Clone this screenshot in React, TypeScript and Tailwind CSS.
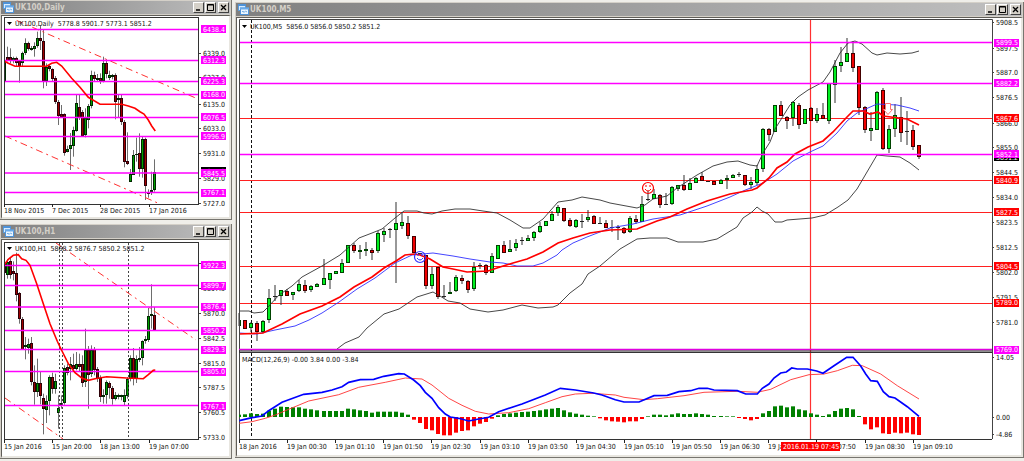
import React from "react";

type Tone = "plain" | "magenta" | "red" | "black";
type Level = [y: number, text: string, tone?: Tone];
type Stamp = [x: number, text: string];

// Polylines are stored on a grid three times finer than the plot.
const fine = (ox: number, oy: number, raw: string) =>
  raw
    .split(" ")
    .map((p) => {
      const [x, y] = p.split(",").map(Number);
      return `${(ox + x / 3).toFixed(1)},${(oy + y / 3).toFixed(1)}`;
    })
    .join(" ");

// Each candle: kind (G up, R down, D flat), high, body top, body bottom, low.
const parse = (raw: string) =>
  raw
    .trim()
    .split(/\s+/)
    .map((c) => {
      const [h, t, b, l] = c.slice(1).split(",").map(Number);
      return { kind: c[0], h, t, b, l };
    });

const DAILY = parse(`
G178,180,243,243 R140,170,184,184 R145,172,182,190 G170,173,182,190 R170,173,188,200 R180,184,198,248
G155,158,188,200 G115,128,158,165 R125,130,148,152 G138,143,150,152 G127,138,148,170 G95,113,138,143
R78,115,124,150 R88,122,243,265 G190,200,243,258 R195,198,206,214 R205,207,238,243 R228,233,307,312
R300,305,348,375 R315,343,352,352 R340,343,458,467 G437,447,455,457 G399,435,447,510 G380,390,437,470
G285,310,393,395 R285,320,355,360 R330,335,407,410 G325,355,405,412 G312,318,360,385 G212,225,318,325
R215,226,238,243 G222,235,240,243 R220,235,243,252 G170,188,243,247 R178,188,222,235 G212,225,233,240
G222,226,232,238 R220,226,305,358 G285,295,300,352 R285,295,365,375 R360,365,487,502 R397,483,492,495
G507,523,545,545 G450,465,525,525 G413,462,465,485 R400,458,507,530 G410,417,507,533 R413,417,557,600
R568,578,583,593 G515,570,577,585 G478,515,570,575`);

const HOURLY = parse(`
R110,123,153,178 G112,120,158,170 R105,118,160,170 R118,148,155,175 R92,152,218,238 R210,213,292,305
R285,290,384,384 G345,370,375,412 G350,365,378,395 R345,362,480,490 R430,481,509,548 G410,483,510,525
R450,484,523,547 R515,528,562,637 G520,538,563,603 G460,464,538,580 R452,464,500,515 G455,478,500,515
G520,558,573,620 G520,542,548,560 G430,438,542,548 R425,436,454,460 G405,425,440,475 R395,430,440,448
G390,426,440,445 R395,426,435,450 R400,426,483,495 G320,384,480,495 R372,384,458,560 G370,384,457,465
R375,380,444,460 R435,442,470,480 R460,468,525,540 G502,518,525,545 G475,480,518,545 R478,482,498,530
R492,497,530,548 G510,520,530,535 G515,520,525,532 G518,520,526,535 G502,520,540,550 G465,470,522,530
G400,408,472,478 R378,408,470,490 G400,410,470,483 G375,408,413,420 G355,357,408,430 G342,350,358,365
G258,283,355,360 G187,275,283,320 R255,278,325,325`);

const MINUTES = parse(`
G313,320,326,326 R320,320,329,329 G322,323,328,332 R321,323,332,341 G320,321,332,333 G289,298,320,323
D285,296,297,301 G290,290,296,305 R289,291,296,296 G292,292,295,300 G280,284,291,292 R280,285,291,293
G285,286,290,292 G283,284,287,287 G259,278,285,285 G273,273,280,289 G271,271,274,274 G259,263,273,273
G245,245,263,263 R243,245,251,253 G245,250,252,259 G242,249,251,256 R248,250,253,260 G231,233,251,253
G228,231,235,242 D228,229,230,238 G202,223,230,283 G212,222,226,229 R216,223,236,239 R236,236,253,253
D253,253,254,254 R255,255,286,289 G267,274,286,289 R267,267,297,299 D285,296,297,298 G282,292,294,294
G275,277,291,292 R275,278,281,284 R280,281,290,293 G262,267,289,291 D263,265,266,269 R264,265,273,275
G253,256,273,273 G245,245,259,259 R241,245,253,253 G240,249,252,252 G239,243,248,251 D237,240,241,245
G235,238,241,241 G231,232,238,241 G222,226,232,233 G221,221,226,226 G211,214,221,221 G205,207,213,216
R208,208,221,222 R218,220,226,227 G219,220,227,228 D214,221,222,228 G210,217,220,222 R215,216,224,224
D217,223,224,224 R220,223,228,228 D220,227,228,232 D225,227,228,240 R227,228,233,234 G216,218,232,233
R215,219,222,224 G196,204,222,222 D191,199,200,201 G189,194,199,199 R194,195,205,208 D193,204,205,205
G186,187,204,205 G185,185,189,191 R175,185,190,191 G178,183,190,190 G177,178,183,183 R172,176,181,181
D181,181,182,182 R181,181,185,185 G179,180,184,184 G175,178,180,189 G174,175,178,178 D172,174,175,177
R175,175,185,186 G177,182,185,189 G165,169,183,185 G128,129,169,172 R128,129,135,141 G105,105,132,132
R101,105,116,116 R116,117,121,129 G101,102,118,126 R103,105,125,129 G109,109,124,124 R107,108,121,121
G108,114,121,123 R103,115,119,119 G83,83,121,124 G60,66,85,103 G47,62,66,72 G38,53,62,62
R41,53,68,72 R66,66,108,115 R106,107,130,133 G112,128,131,141 G91,92,130,130 R88,90,149,150
G125,129,149,153 G104,115,129,137 R97,117,133,142 D111,131,132,145 R125,130,147,150 R145,145,157,159`);

const HISTOGRAM =
  "208 207 204 206 205 196 190 184 185 186 186 190 192 195 197 197 197 197 190 192 195 197 202 199 199 199 199 202 208 223 233 251 255 266 270 270 262 257 255 243 235 230 220 210 206 204 202 200 199 197 195 192 190 188 195 201 205 208 211 213 219 225 228 229 231 228 228 221 213 208 208 210 207 204 206 206 204 206 208 212 212 213 213 218 221 225 221 204 197 183 181 186 183 192 195 204 208 212 207 197 190 188 192 212 237 252 246 264 266 262 264 262 267 269"
    .split(" ")
    .map(Number);

const minuteX = (n: number) => Math.round(239.3 + n * 6.015);

const FILL: Record<Tone, string> = {
  plain: "none",
  magenta: "#ff00ff",
  red: "#ff0000",
  black: "#000000",
};

function PriceScale({ x, tag, levels }: { x: number; tag: number; levels: Level[] }) {
  return (
    <g>
      {levels.map(([y, text, tone = "plain"]) => (
        <g key={text}>
          {tone === "plain" ? (
            <path d={`M${x} ${Math.floor(y) + 0.5}h2`} stroke="#444" />
          ) : (
            <rect x={x + 2} y={Math.round(y - 4)} width={tag} height={8} fill={FILL[tone]} />
          )}
          <text x={x + 4} y={Math.round(y + 2.5)} fill={tone === "plain" ? "#111" : "#fff"}>
            {text}
          </text>
        </g>
      ))}
    </g>
  );
}

function TimeScale({ stamps, y }: { stamps: Stamp[]; y: number }) {
  return (
    <g>
      {stamps.map(([x, text]) => (
        <g key={text}>
          <path d={`M${x + 0.5} ${y}v3`} stroke="#222" />
          <text x={x} y={y + 9} fill="#111">
            {text}
          </text>
        </g>
      ))}
    </g>
  );
}

function Header({ x, y, children }: { x: number; y: number; children: React.ReactNode }) {
  return (
    <g>
      <path d={`M${x} ${y - 4}h5l-2.500 3z`} fill="#000" />
      <text x={x + 8} y={y} fill="#111">
        {children}
      </text>
    </g>
  );
}

function Levels({ x1, x2, ys, color }: { x1: number; x2: number; ys: number[]; color: string }) {
  return (
    <g>
      {ys.map((y) => (
        <path key={y} d={`M${x1} ${y}H${x2}`} stroke={color} strokeWidth={color === "#ff00ff" ? 1.6 : 1} />
      ))}
    </g>
  );
}

function SmallCandles({ data, oy }: { data: ReturnType<typeof parse>; oy: number }) {
  return (
    <g>
      {data.map((c, n) => {
        const x = 4 + n * 3;
        const t = Math.round(oy + c.t / 3);
        const b = Math.max(t + 1, Math.round(oy + c.b / 3));
        const left = n === 0 ? x : x - 1;
        return (
          <g key={n}>
            <rect x={x} y={oy + c.h / 3} width={1} height={(c.l - c.h) / 3} fill="#6e6e6e" />
            <rect x={left} y={t} width={n === 0 ? 2 : 3} height={b - t} fill={c.kind === "G" ? "#002800" : "#2c0008"} />
            {b - t > 2 && (
              <rect x={x} y={t + 1} width={1} height={b - t - 2} fill={c.kind === "G" ? "#00a000" : "#a00000"} />
            )}
          </g>
        );
      })}
    </g>
  );
}

function TerminalIcon() {
  return (
    <svg viewBox="0 0 11 11" className="h-[11px] w-[11px] shrink-0" aria-hidden="true">
      <rect x="0.500" y="0.500" width="7" height="6" fill="#d8ecff" stroke="#5b9ddc" />
      <rect x="0" y="0" width="8" height="2" fill="#4f93d8" />
      <rect x="2.500" y="4" width="8" height="6.500" fill="#eaf5ff" stroke="#4f93d8" />
      <rect x="2" y="3.500" width="9" height="2" fill="#68aaea" />
      <path d="M4 8l1-1 1 1.500 1.500-1.500L9 8" fill="none" stroke="#5b9ddc" strokeWidth="0.800" />
    </svg>
  );
}

const BUTTON =
  "flex h-[11px] w-[11px] items-center justify-center border border-t-white border-l-white border-r-[#404040] border-b-[#404040] bg-[#d4d0c8]";

function ChartWindow({ title, children }: { title: string; children: React.ReactNode }) {
  return (
    <section className="border-r border-b border-[#77756f] bg-[#d4d0c8] pt-px pl-px">
      <header className="mr-px mb-px flex h-[13px] items-center bg-linear-to-r from-[#808080] to-[#c0c0c0] pl-[2px] pr-px">
        <TerminalIcon />
        <h2 className="ml-px flex-1 font-['DejaVu_Sans_Condensed','DejaVu_Sans',sans-serif] text-[8px] leading-[12px] font-bold text-[#d4d0c8]">
          {title}
        </h2>
        <button type="button" aria-label="Minimize" className={BUTTON}>
          <svg viewBox="0 0 9 9" className="h-[9px] w-[9px]">
            <path d="M2 7h4" stroke="#000" strokeWidth="1.500" />
          </svg>
        </button>
        <button type="button" aria-label="Maximize" className={`${BUTTON} ml-px`}>
          <svg viewBox="0 0 9 9" className="h-[9px] w-[9px]">
            <path d="M1.500 1.500h6v6h-6zM1.500 2h6" fill="none" stroke="#000" />
          </svg>
        </button>
        <button type="button" aria-label="Close" className={`${BUTTON} ml-[2px]`}>
          <svg viewBox="0 0 9 9" className="h-[9px] w-[9px]">
            <path d="M2 2l5 5M7 2l-5 5" stroke="#000" strokeWidth="1.300" />
          </svg>
        </button>
      </header>
      <div className="border-t border-r-2 border-b-2 border-l border-t-[#5f5d58] border-r-[#e8e6e0] border-b-[#e8e6e0] border-l-[#5f5d58] bg-white pt-px pl-px">
        {children}
      </div>
    </section>
  );
}

const PLOT = "block h-auto w-full font-['DejaVu_Sans_Condensed','DejaVu_Sans',sans-serif] text-[7px]";

function DailyChart() {
  return (
    <svg viewBox="3 17 226 200" className={PLOT} fill="currentColor">
      <SmallCandles data={DAILY} oy={0} />
      <g fill="none">
        <path d="M16.700 20.500L198 99" stroke="#ff3030" strokeDasharray="7 4 2 4" />
        <path d="M5 136L160 204" stroke="#ff3030" strokeDasharray="7 4 2 4" />
        <Levels x1={5} x2={199} ys={[29.5, 60.5, 81.5, 94.5, 117.5, 136.5, 173, 192.5]} color="#ff00ff" />
        <polyline
          points={fine(0, 0, "14,184 25,190 45,199 140,199 155,190 170,187 185,198 215,235 240,262 265,292 300,313 365,313 385,318 405,325 420,335 432,342 445,360 455,378 466,393")}
          stroke="#ff0000"
          strokeWidth="1.600"
        />
        <rect x="4.500" y="17.500" width="194" height="187" stroke="#333" />
      </g>
      <Header x={7} y={26}>
        UK100,Daily&nbsp; 5778.8 5901.7 5773.1 5851.2
      </Header>
      <PriceScale
        x={199}
        tag={25}
        levels={[
          [53.5, "6339.0"], [77.5, "6237.0"], [104, "6135.0"], [128, "6033.0"], [153, "5931.0"],
          [178, "5829.0"], [203, "5727.0"], [171, "5851.2", "black"],
          [29, "6438.4", "magenta"], [60, "6312.3", "magenta"], [81, "6225.3", "magenta"], [94.5, "6168.0", "magenta"],
          [117, "6076.5", "magenta"], [136, "5996.9", "magenta"], [173, "5845.5", "magenta"], [192.5, "5767.1", "magenta"],
        ]}
      />
      <TimeScale y={204} stamps={[[4, "18 Nov 2015"], [52, "7 Dec 2015"], [100, "28 Dec 2015"], [149, "17 Jan 2016"]]} />
    </svg>
  );
}

function HourlyChart() {
  return (
    <svg viewBox="3 241 226 215" className={PLOT} fill="currentColor">
      <SmallCandles data={HOURLY} oy={222} />
      <g fill="none">
        <path d="M59.500 243V439M62.500 243V439M128.500 243V439" stroke="#444" strokeDasharray="2 2" />
        <path d="M56 243L196 340" stroke="#ff3030" strokeDasharray="7 4 2 4" />
        <path d="M5 398L63 439" stroke="#ff3030" strokeDasharray="7 4 2 4" />
        <Levels x1={5} x2={199} ys={[265.5, 285.5, 307, 330.5, 349.5, 371.5, 405.5]} color="#ff00ff" />
        <polyline
          points={fine(0, 222, "14,127 25,112 40,100 55,98 65,110 78,115 90,130 110,185 130,245 150,305 172,358 180,375 205,425 225,452 245,468 265,475 285,470 320,464 380,468 430,470 445,458 460,445 466,444")}
          stroke="#ff0000"
          strokeWidth="1.600"
        />
        <rect x="4.500" y="242.500" width="194" height="197" stroke="#333" />
      </g>
      <Header x={7} y={251}>
        UK100,H1&nbsp; 5868.2 5876.7 5850.2 5851.2
      </Header>
      <PriceScale
        x={199}
        tag={25}
        levels={[
          [263.5, "5925.0"], [288, "5897.5"], [313.5, "5870.0"], [338, "5842.5"], [363, "5815.0"], [387.5, "5787.5"],
          [412.5, "5760.5"], [437, "5733.0"],
          [265, "5922.3", "magenta"], [285.5, "5899.7", "magenta"], [306.5, "5876.4", "magenta"], [330.5, "5850.2", "magenta"],
          [349.5, "5829.3", "magenta"], [371.5, "5805.0", "magenta"], [406, "5767.1", "magenta"],
        ]}
      />
      <TimeScale y={440} stamps={[[4, "15 Jan 2016"], [52, "15 Jan 20:00"], [100, "18 Jan 13:00"], [149, "19 Jan 07:00"]]} />
    </svg>
  );
}

const UPPER =
  "239,311 249,311 254,313 263,312 269,306 279,295 292,286 302,277 322,266 340,255 349,247 359,238 372,233 382,229 395,218 404,211 417,211 424,213 432,214 442,211 455,209 470,209 483,211 497,213 510,220 523,228 530,228 543,219 558,202 572,200 582,197 600,200 610,203 637,208 645,205 653,199 667,196 677,188 697,175 713,166 727,162 738,161 750,165 757,166 763,153 770,142 775,129 790,105 798,97 808,90 823,82 830,72 840,53 848,43 855,41 862,44 872,53 877,55 887,53 900,54 912,53 919,51";
const LOWER =
  "337,349 345,343 359,337 367,328 384,314 399,309 417,297 433,292 440,296 448,301 460,303 470,309 488,312 503,310 522,305 538,308 553,307 558,305 570,293 582,284 588,274 600,266 620,249 637,239 650,238 667,238 678,242 703,242 717,239 737,227 743,218 752,212 757,207 762,211 768,214 775,222 782,222 787,220 812,218 825,215 838,207 848,200 857,189 867,172 877,155 887,156 900,157 910,163 919,170";
const SLOW =
  "239,333 257,334 275,330 295,326 309,320 322,313 339,302 357,289 375,278 395,263 412,255 433,253 453,256 470,259 490,262 503,263 517,266 533,266 543,263 550,259 557,255 562,250 573,243 587,237 600,232 610,228 633,224 653,219 680,215 707,206 730,197 743,191 763,183 777,174 793,161 810,152 823,146 837,133 847,121 857,113 868,108 877,104 897,105 910,108 919,111";
const FAST =
  "239,334 263,333 282,324 300,314 322,306 340,297 354,287 372,277 384,268 396,261 405,255 414,254 420,255 430,259 443,267 453,269 467,272 488,271 500,267 513,263 527,259 543,252 558,243 573,238 590,233 610,230 637,229 657,221 670,217 687,209 707,201 730,194 752,190 757,188 769,178 777,168 787,162 795,154 808,147 823,141 833,132 847,117 853,111 863,111 870,114 878,112 883,116 907,119 919,125";

const MACD_MAIN = [
  fine(232, 345, "22,227 60,218 90,213 110,197 150,172 215,148 270,142 300,135 330,125 350,112 385,104 425,103 455,94 500,86 517,87 545,105 565,122 580,142 600,160 620,188 640,207 655,216 680,220 710,228 740,222 770,217 800,200 870,177 940,150 985,130 1030,135 1085,144 1110,150 1150,164 1176,171"),
  fine(624, 345, "0,171 45,171 90,152 130,151 165,140 200,137 225,130 250,130 270,135 340,137 365,147 400,147 415,130 435,117 450,99 470,84 487,81 503,69 520,72 550,72 578,78 597,85 630,62 668,37 687,37 710,63 725,87 740,107 760,109 778,140 795,155 813,159 850,185 885,214"),
].join(" ");
const MACD_SIGNAL = [
  fine(232, 345, "22,235 60,230 100,220 130,210 170,193 230,168 320,149 380,127 460,112 520,99 570,102 600,120 650,160 690,181 730,199 770,207 830,203 890,191 940,173 990,155 1030,147 1080,145 1150,150"),
  fine(624, 345, "0,157 60,164 100,161 180,152 240,142 340,139 400,142 440,133 500,104 555,89 600,87 640,77 685,61 715,62 770,87 820,122 885,162"),
].join(" ");

function Face({ x, y, color }: { x: number; y: number; color: string }) {
  return (
    <g fill="none" stroke={color}>
      <circle cx={x} cy={y} r="5.500" strokeWidth="1.200" />
      <path d={`M${x - 3} ${y + 1}q3 4 6 0`} />
      <path d={`M${x - 2} ${y - 3}v2M${x + 2} ${y - 3}v2`} />
    </g>
  );
}

function MinuteChart() {
  return (
    <svg viewBox="238 19 783 436" className={PLOT} fill="currentColor">
      <g fill="none">
        <path d="M251.500 20V351M251.500 353V438" stroke="#111" strokeDasharray="3 2" />
        <Levels x1={239} x2={992} ys={[118.5, 180.5, 212.5, 266.5, 303.5]} color="#ff2020" />
        <path d="M810.500 20V439" stroke="#ff3030" strokeWidth="1.200" />
      </g>
      {MINUTES.map((c, n) => {
        const x = minuteX(n);
        const left = n === 0 ? x : x - 2;
        return (
          <g key={n}>
            <rect x={x - 0.5} y={c.h} width={1} height={c.l - c.h} fill="#333" />
            {c.kind === "D" ? (
              <rect x={x - 2} y={c.t} width={4} height={1} fill="#222" />
            ) : (
              <>
                <rect x={left} y={c.t} width={n === 0 ? 2 : 4} height={c.b - c.t} fill={c.kind === "G" ? "#004400" : "#440000"} />
                <rect
                  x={n === 0 ? x : x - 1}
                  y={c.t + 1}
                  width={n === 0 ? 1 : 2}
                  height={Math.max(0, c.b - c.t - 2)}
                  fill={c.kind === "G" ? "#00f020" : "#f00000"}
                />
              </>
            )}
          </g>
        );
      })}
      <g fill="none">
        <polyline points={UPPER} stroke="#333" strokeWidth="0.900" />
        <polyline points={LOWER} stroke="#333" strokeWidth="0.900" />
        <polyline points={SLOW} stroke="#3030ff" strokeWidth="0.900" />
        <polyline points={FAST} stroke="#ff0000" strokeWidth="1.700" />
        <Levels x1={239} x2={992} ys={[42.5, 83.5, 154.5]} color="#ff00ff" />
        <path d="M885.500 103.500h5v6h2l-4.500 5-4.500-5h2z" fill="#fff" stroke="#ff7070" />
      </g>
      <Face x={648} y={188} color="#ff0000" />
      <Face x={420} y={257} color="#3030ff" />
      <g fill="none">
        <path d="M239.500 439V19.500H992.500V439" stroke="#444" />
        <path d="M239 349.500H992" stroke="#e000e0" strokeWidth="1.600" />
        <path d="M239 351H992" stroke="#222" />
        <path d="M239 352.500H992M239 439.500H992" stroke="#333" />
      </g>
      <Header x={242} y={29}>
        UK100,M5&nbsp; 5856.0 5856.0 5850.2 5851.2
      </Header>
      <g>
        {HISTOGRAM.map((top, n) => {
          const h = (215 - top) / 3;
          return (
            <rect
              key={n}
              x={minuteX(n) - (n === 0 ? 0 : 2)}
              y={h > 0 ? 417 - h : 417}
              width={n === 0 ? 2 : 4}
              height={Math.abs(h)}
              fill={h > 0 ? "#008000" : "#ff0000"}
            />
          );
        })}
      </g>
      <polyline points={MACD_SIGNAL} fill="none" stroke="#ff3030" strokeWidth="0.900" />
      <polyline points={MACD_MAIN} fill="none" stroke="#0000ff" strokeWidth="1.700" />
      <text x="242" y="362" fill="#111">
        MACD(12,26,9) -0.00 3.84 0.00 -3.84
      </text>
      <PriceScale
        x={992}
        tag={25}
        levels={[
          [22, "5908.5"], [48, "5897.5"], [72.5, "5887.0"], [97.5, "5876.5"], [123, "5866.0"], [147.5, "5855.0"],
          [172.5, "5844.5"], [197.5, "5834.0"], [222.5, "5823.5"], [247.5, "5812.5"], [272, "5802.0"],
          [297.5, "5791.5"], [322.5, "5781.0"], [157, "5851.2", "black"],
          [42.5, "5899.5", "magenta"], [83, "5882.2", "magenta"], [118, "5867.6", "red"], [154, "5852.1", "magenta"],
          [180, "5840.9", "red"], [212, "5827.5", "red"], [266, "5804.5", "red"], [302.5, "5789.0", "red"],
          [349.5, "5769.0", "magenta"], [357.5, "14.05"], [417, "0.00"], [434.5, "-4.86"],
        ]}
      />
      <TimeScale
        y={440}
        stamps={[
          [239, "18 Jan 2016"], [287, "19 Jan 00:30"], [335, "19 Jan 01:10"], [383, "19 Jan 01:50"], [431, "19 Jan 02:30"],
          [480, "19 Jan 03:10"], [528, "19 Jan 03:50"], [576, "19 Jan 04:30"], [624, "19 Jan 05:10"], [672, "19 Jan 05:50"],
          [720, "19 Jan 06:30"], [768, "19 Jan 07:10"], [816, "19 Jan 07:50"], [865, "19 Jan 08:30"], [913, "19 Jan 09:10"],
        ]}
      />
      <rect x="781" y="442" width="59" height="9" fill="#ff0000" />
      <text x="783" y="449" fill="#fff">
        2016.01.19 07:45
      </text>
    </svg>
  );
}

export default function App() {
  return (
    <main className="min-h-screen bg-[#efeee9]">
      <div className="grid grid-cols-[232fr_789fr] items-start gap-[3px]">
        <div className="flex flex-col gap-1">
          <ChartWindow title="UK100,Daily">
            <DailyChart />
          </ChartWindow>
          <ChartWindow title="UK100,H1">
            <HourlyChart />
          </ChartWindow>
        </div>
        <div className="pt-[2px]">
          <ChartWindow title="UK100,M5">
            <MinuteChart />
          </ChartWindow>
        </div>
      </div>
    </main>
  );
}
